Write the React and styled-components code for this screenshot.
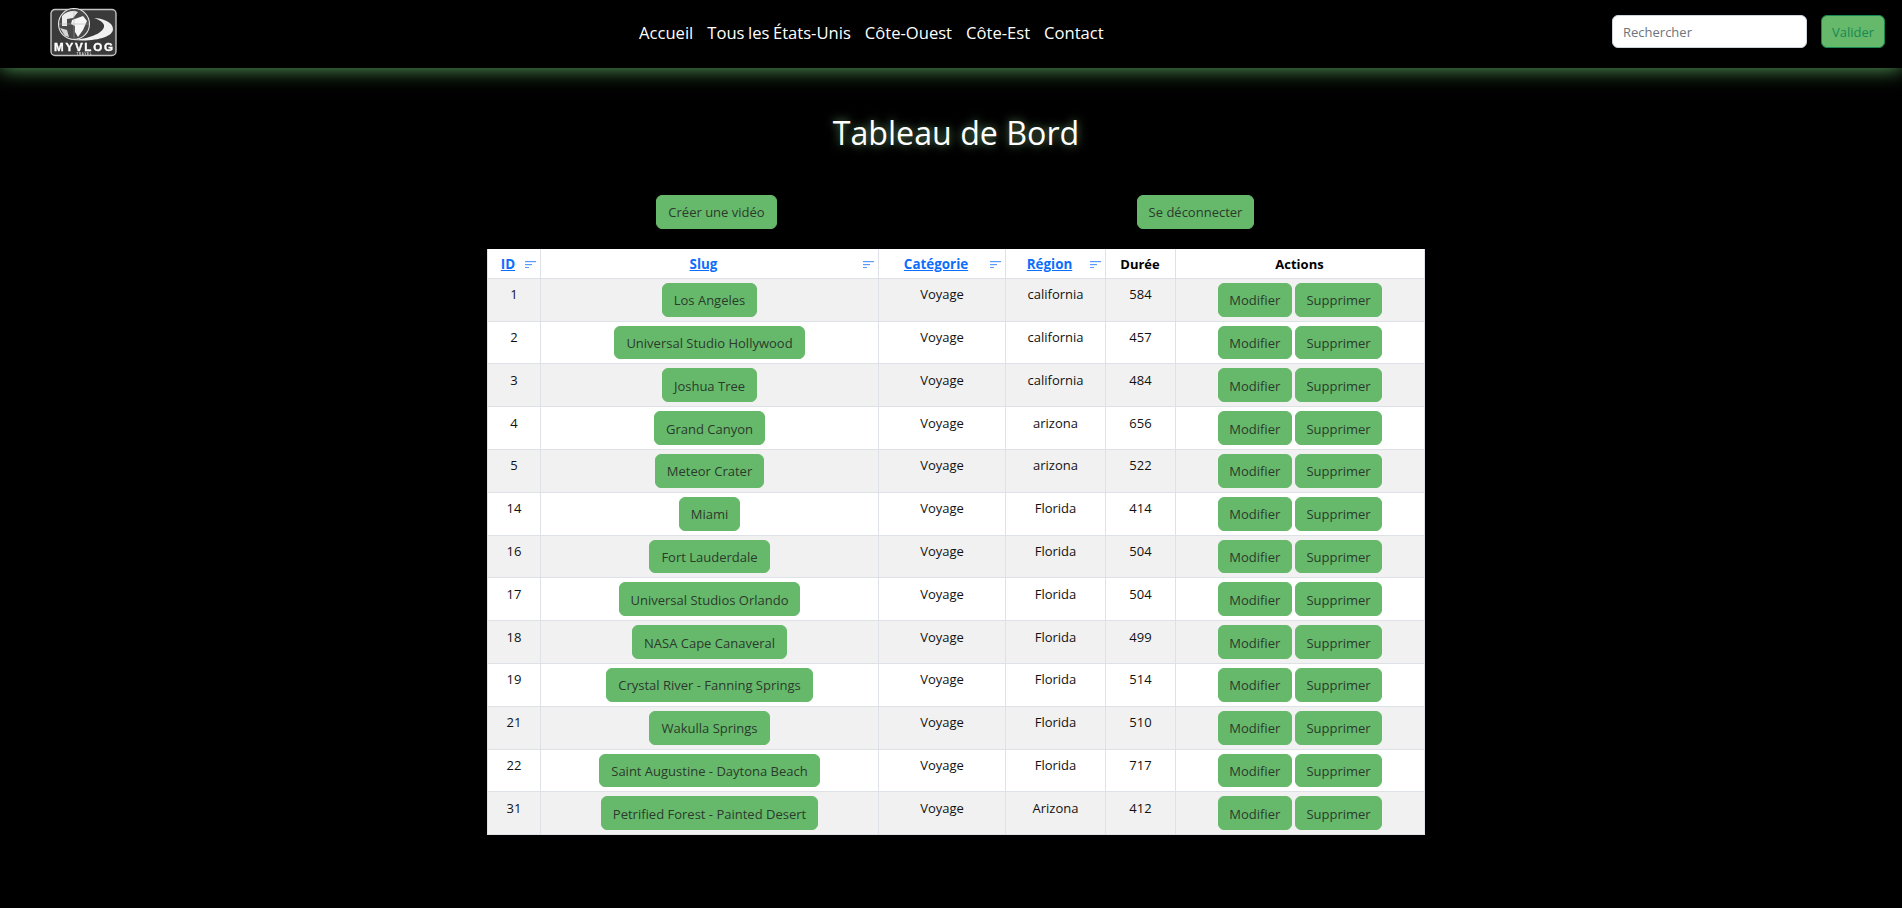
import React from 'react';
import styled, { createGlobalStyle } from 'styled-components';

const FONT = '"Open Sans", "Noto Sans", sans-serif';

const Global = createGlobalStyle`
  html, body { margin: 0; padding: 0; background: #000; }
  body { font-family: ${FONT}; font-size: 13px; color: #212529; min-height: 908px; }
  * { box-sizing: border-box; }
`;

const Nav = styled.nav`
  display: flex;
  align-items: center;
  height: 68px;
  padding: 0 17px 3px 50px;
  background: #000;
  box-shadow: 0 0 20px rgba(102, 185, 106, 0.95);
`;

const LogoMark = styled.svg`
  display: block;
  width: 68px;
  height: 50px;
  flex: none;
  filter: blur(0.35px);
`;

const NavLinks = styled.ul`
  display: flex;
  gap: 14px;
  list-style: none;
  margin: 0 0 0 521px;
  padding: 0;
`;

const NavLink = styled.a`
  color: #fff;
  font-size: 16.6px;
  line-height: 24px;
  text-decoration: none;
  white-space: nowrap;
  word-spacing: -0.8px;
`;

const SearchForm = styled.form`
  display: flex;
  gap: 14px;
  margin: 0 0 2px auto;
`;

const SearchInput = styled.input`
  width: 195px;
  height: 33px;
  padding: 0 10px;
  border: 1px solid #ced4da;
  border-radius: 6px;
  background: #fff;
  font: 13px ${FONT};
  &::placeholder { color: #6c757d; opacity: 1; }
`;

const Button = styled.button`
  display: inline-block;
  height: 33.8px;
  padding: 2px 11px 0;
  border: 1px solid #66b96a;
  border-radius: 6px;
  background: #66b96a;
  color: #2b3a2d;
  font: 13px/29px ${FONT};
  white-space: nowrap;
`;

const ValidateButton = styled(Button)`
  width: 64px;
  padding: 2px 0 0;
  height: 33px;
  border-color: #198754;
  color: #198754;
`;

const RowAction = styled(Button)`
  padding: 2px 10.5px 0;
`;

const Main = styled.main`
  width: 958px;
  margin: 0 auto;
  position: relative;
  left: 5px;
`;

const Title = styled.h1`
  margin: 45px 0 0;
  height: 40px;
  color: #fff;
  font-size: 32.2px;
  font-weight: 400;
  line-height: 40px;
  text-align: center;
  text-shadow: 0 0 10px rgba(140, 200, 140, 0.75);
`;

const ActionBar = styled.div`
  display: grid;
  grid-template-columns: 1fr 1fr;
  justify-items: center;
  margin-top: 42px;
`;

const Table = styled.table`
  width: 937px;
  margin: 20px 0 0 10px;
  border-collapse: collapse;
  table-layout: fixed;
  background: #fff;
  color: #111;
`;

const Th = styled.th`
  height: 29.5px;
  padding: 2px 4px 0 3px;
  border: 1px solid #dee2e6;
  border-top: 0;
  background: #fff;
  color: #000;
  font-size: 13px;
  font-weight: 700;
  text-align: center;
`;

const ThInner = styled.div`
  display: flex;
  align-items: center;
`;

const SortLabel = styled.a`
  flex: 1;
  color: #0d6efd;
  font-size: 13.4px;
  text-decoration: underline;
  text-align: center;
`;

const SortIcon = styled.svg`
  display: block;
  flex: none;
  width: 11px;
  height: 7px;
`;

const Row = styled.tr`
  background: ${p => (p.$odd ? '#f1f1f1' : '#fff')};
`;

const Td = styled.td`
  padding: 4px;
  border: 1px solid #dee2e6;
  vertical-align: top;
  text-align: center;
  font-size: 13px;
  line-height: 21px;
`;

const TextCell = styled(Td)`
  padding-top: 5.5px;
`;

const Actions = styled.div`
  display: flex;
  justify-content: center;
  gap: 3px;
`;

const rows = [
  [1, 'Los Angeles', 'california', 584],
  [2, 'Universal Studio Hollywood', 'california', 457],
  [3, 'Joshua Tree', 'california', 484],
  [4, 'Grand Canyon', 'arizona', 656],
  [5, 'Meteor Crater', 'arizona', 522],
  [14, 'Miami', 'Florida', 414],
  [16, 'Fort Lauderdale', 'Florida', 504],
  [17, 'Universal Studios Orlando', 'Florida', 504],
  [18, 'NASA Cape Canaveral', 'Florida', 499],
  [19, 'Crystal River - Fanning Springs', 'Florida', 514],
  [21, 'Wakulla Springs', 'Florida', 510],
  [22, 'Saint Augustine - Daytona Beach', 'Florida', 717],
  [31, 'Petrified Forest - Painted Desert', 'Arizona', 412],
];

const Sort = () => (
  <SortIcon viewBox="0 0 11 7" aria-hidden="true">
    <rect x="0" y="0" width="11" height="1.2" fill="#5a9bfd" />
    <rect x="0" y="3" width="7" height="1.2" fill="#5a9bfd" />
    <rect x="0" y="6" width="4" height="1.2" fill="#5a9bfd" />
  </SortIcon>
);

const Logo = () => (
  <LogoMark viewBox="0 0 68 50" aria-label="MyVlog Travel">
    <rect x="1" y="1.5" width="65" height="46" rx="4" fill="#3a3a3a" stroke="#c4c4c4" strokeWidth="1.4" />
    <circle cx="24" cy="16" r="15.5" fill="#4a4a4a" stroke="#e2e2e2" strokeWidth="1.1" />
    <path d="M12 8 C16 3 24 2 28 4 L23 10 L17 11 L17 18 L12 18 Z" fill="#ececec" />
    <path d="M22 12 L33 8 L37 13 L33 22 L28 29 L25 24 L25 18 L21 16 Z" fill="#f6f6f6" />
    <path d="M10 20 L17 22 L19 29 L15 28 Z" fill="#d6d6d6" />
    <path d="M24 1 V31 M9 16 H39" stroke="#a8a8a8" strokeWidth="0.5" fill="none" />
    <path d="M22 32 C38 31 52 26 54 19 C55 15 50 12 44 10 C52 10 63 14 63 21 C63 29 46 34 22 32 Z" fill="#f0f0f0" />
    <text x="33.5" y="42.5" textAnchor="middle" fill="#fff" stroke="#fff" strokeWidth="0.35" fontFamily='"Liberation Sans", sans-serif' fontWeight="700" fontSize="11.6" textLength="59">MYVLOG</text>
    <text x="34" y="46.8" textAnchor="middle" fill="#ddd" fontFamily='"Liberation Sans", sans-serif' fontWeight="700" fontSize="2.8" textLength="15">TRAVEL</text>
  </LogoMark>
);

const columns = [53, 338, 127, 100, 70, 249];
const sortable = ['ID', 'Slug', 'Catégorie', 'Région'];

export default function App() {
  return (
    <>
      <Global />
      <Nav>
        <Logo />
        <NavLinks>
          {['Accueil', 'Tous les États-Unis', 'Côte-Ouest', 'Côte-Est', 'Contact'].map(l => (
            <li key={l}><NavLink href="#">{l}</NavLink></li>
          ))}
        </NavLinks>
        <SearchForm onSubmit={e => e.preventDefault()}>
          <SearchInput placeholder="Rechercher" />
          <ValidateButton>Valider</ValidateButton>
        </SearchForm>
      </Nav>
      <Main>
        <Title>Tableau de Bord</Title>
        <ActionBar>
          <Button>Créer une vidéo</Button>
          <Button>Se déconnecter</Button>
        </ActionBar>
        <Table>
          <colgroup>
            {columns.map((w, i) => <col key={i} width={w} />)}
          </colgroup>
          <thead>
            <tr>
              {sortable.map(l => (
                <Th key={l}>
                  <ThInner>
                    <SortLabel href="#">{l}</SortLabel>
                    <Sort />
                  </ThInner>
                </Th>
              ))}
              <Th>Durée</Th>
              <Th>Actions</Th>
            </tr>
          </thead>
          <tbody>
            {rows.map(([id, slug, region, dur], i) => (
              <Row key={id} $odd={i % 2 === 0}>
                <TextCell>{id}</TextCell>
                <Td><Button>{slug}</Button></Td>
                <TextCell>Voyage</TextCell>
                <TextCell>{region}</TextCell>
                <TextCell>{dur}</TextCell>
                <Td>
                  <Actions>
                    <RowAction>Modifier</RowAction>
                    <RowAction>Supprimer</RowAction>
                  </Actions>
                </Td>
              </Row>
            ))}
          </tbody>
        </Table>
      </Main>
    </>
  );
}
